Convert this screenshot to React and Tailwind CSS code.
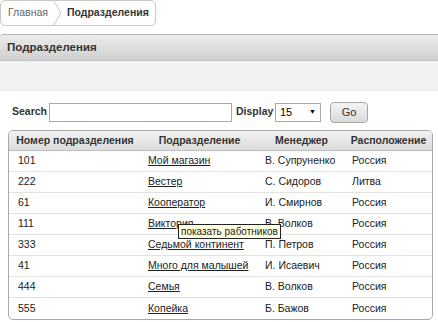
import React from "react";

const rows = [
  ["101", "Мой магазин", "В. Супруненко", "Россия"],
  ["222", "Вестер", "С. Сидоров", "Литва"],
  ["61", "Кооператор", "И. Смирнов", "Россия"],
  ["111", "Виктория", "В. Волков", "Россия"],
  ["333", "Седьмой континент", "П. Петров", "Россия"],
  ["41", "Много для малышей", "И. Исаевич", "Россия"],
  ["444", "Семья", "В. Волков", "Россия"],
  ["555", "Копейка", "Б. Бажов", "Россия"],
];

export default function App() {
  return (
    <div
      className="relative w-[438px] h-[322px] bg-white overflow-hidden text-[10.5px] text-[#333]"
      style={{ fontFamily: '"Liberation Sans", Arial, sans-serif' }}
    >
      {/* Breadcrumb */}
      <div className="flex items-center h-[26px] w-[156px] border border-[#c8c8c8] rounded-[5px] bg-white">
        <span className="pl-[7px] text-[#666]">Главная</span>
        <svg width="14" height="26" viewBox="0 0 14 26" className="ml-[4px] shrink-0">
          <path d="M1 0 L9 13 L1 26" fill="none" stroke="#c8c8c8" strokeWidth="1" />
        </svg>
        <span className="font-bold pl-[1px] text-[#333]">Подразделения</span>
      </div>

      {/* Region header */}
      <div className="mt-[8px] h-[27px] flex items-center pl-[7px] border-t border-[#b5b5b5] border-b border-b-[#c4c4c4] rounded-tl-[3px] bg-gradient-to-b from-[#ececec] to-[#d0d0d0]">
        <span className="font-bold text-[11.5px] text-[#333]">Подразделения</span>
      </div>
      <div className="h-[30px] bg-[#f2f2f2] border-b border-[#ececec]"></div>

      {/* Search row */}
      <div className="flex items-center mt-[10px] h-[22px]">
        <span className="ml-[12px] w-[37px] font-bold text-[#333]">Search</span>
        <div className="w-[183px] h-[19px] border border-[#a9a9a9] bg-white"></div>
        <span className="ml-[4px] w-[39px] font-bold text-[#333]">Display</span>
        <div className="w-[46px] h-[19px] border border-[#a9a9a9] bg-white flex items-center justify-between px-[4px]">
          <span className="text-[#000] text-[11px]">15</span>
          <span className="text-[#000] text-[7px]">▼</span>
        </div>
        <div className="ml-[9px] w-[38px] h-[21px] rounded-[4px] border border-[#a8a8a8] bg-gradient-to-b from-[#f4f4f4] to-[#dadada] flex items-center justify-center text-[11px] text-[#333]">
          Go
        </div>
      </div>

      {/* Table */}
      <div className="mt-[7px] ml-[8px] w-[425px] border border-[#a9a9a9] rounded-[5px] overflow-hidden">
        <div className="grid grid-cols-[132px_117px_87px_87px] h-[20px] items-center bg-gradient-to-b from-[#f2f2f2] to-[#dcdcdc] border-b border-[#bdbdbd] font-bold text-[#333] whitespace-nowrap">
          <div className="text-center">Номер подразделения</div>
          <div className="text-center">Подразделение</div>
          <div className="text-center">Менеджер</div>
          <div className="text-center">Расположение</div>
        </div>
        {rows.map((r, i) => (
          <div
            key={i}
            className={`grid grid-cols-[132px_117px_87px_87px] h-[21px] items-center text-[#222] ${
              i < rows.length - 1 ? "border-b border-[#e2e2e2]" : ""
            }`}
          >
            <div className="pl-[9px]">{r[0]}</div>
            <div className="pl-[7px] underline whitespace-nowrap">{r[1]}</div>
            <div className="pl-[7px] whitespace-nowrap">{r[2]}</div>
            <div className="pl-[7px]">{r[3]}</div>
          </div>
        ))}
      </div>

      {/* Tooltip */}
      <div className="absolute left-[178px] top-[224px] h-[15px] px-[2px] flex items-center border border-[#222] bg-[#ffffe1] text-[10px] text-[#222] leading-none whitespace-nowrap">
        показать работников
      </div>
    </div>
  );
}
